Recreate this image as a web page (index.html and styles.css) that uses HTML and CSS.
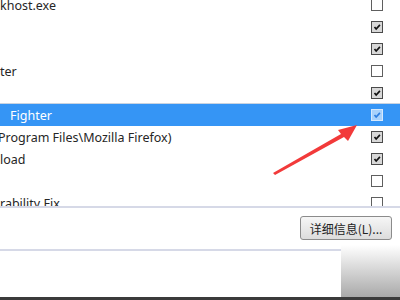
FILE: index.html
```html
<!DOCTYPE html>
<html lang="zh-CN">
<head>
    <meta charset="UTF-8">
    <title>启动项</title>
    <link rel="stylesheet" href="styles.css">
</head>
<body>
    <div class="window">
        <div class="list">
            <div class="rows">
                <div class="row"><span class="name">khost.exe</span><span class="box"></span></div>
                <div class="row"><span class="name"></span><span class="box checked"><svg viewBox="0 0 12 12"><path d="M3 6 L5 8.5 L9.5 3.5"/></svg></span></div>
                <div class="row"><span class="name"></span><span class="box checked"><svg viewBox="0 0 12 12"><path d="M3 6 L5 8.5 L9.5 3.5"/></svg></span></div>
                <div class="row"><span class="name">ter</span><span class="box"></span></div>
                <div class="row"><span class="name"></span><span class="box checked"><svg viewBox="0 0 12 12"><path d="M3 6 L5 8.5 L9.5 3.5"/></svg></span></div>
                <div class="row selected"><span class="name indent">Fighter</span><span class="box checked"><svg viewBox="0 0 12 12"><path d="M3 6 L5 8.5 L9.5 3.5"/></svg></span></div>
                <div class="row"><span class="name clip">Program Files\Mozilla Firefox)</span><span class="box checked"><svg viewBox="0 0 12 12"><path d="M3 6 L5 8.5 L9.5 3.5"/></svg></span></div>
                <div class="row"><span class="name">load</span><span class="box checked"><svg viewBox="0 0 12 12"><path d="M3 6 L5 8.5 L9.5 3.5"/></svg></span></div>
                <div class="row"><span class="name"></span><span class="box"></span></div>
                <div class="row"><span class="name">rability Fix</span><span class="box"></span></div>
            </div>
        </div>
        <div class="actions">
            <button class="details">详细信息(L)...</button>
        </div>
        <div class="separator"></div>
        <div class="footer"></div>
        <div class="taskbar"></div>

        <div class="fade"></div>
        <svg class="arrow" width="400" height="300" viewBox="0 0 400 300">
            <polygon points="273,173 341,134 338,130 357,125 348,141 344,137 275,175"/>
        </svg>
    </div>
</body>
</html>
```

FILE: styles.css
```css
body {
    margin: 0;
    background-color: white;
    font-family: "Noto Sans", "Noto Sans CJK SC", sans-serif;
    font-size: 12.5px;
    color: #262626;
}
.window {
    position: relative;
    width: 400px;
    height: 300px;
    overflow: hidden;
    display: flex;
    flex-direction: column;
}
.list {
    height: 208px;
    box-sizing: border-box;
    overflow: hidden;
    border-bottom: 2px solid #d6d9e7;
}
.rows {
    margin-top: -6px;
}
.row {
    height: 22px;
    display: flex;
    align-items: center;
    justify-content: space-between;
    padding-right: 17px;
}
.row .name {
    white-space: nowrap;
}
.row .indent {
    padding-left: 10px;
}
.row .clip {
    margin-left: -2px;
}
.row.selected {
    background-color: #3595f5;
    color: white;
    box-shadow: 0 -1px 0 #c9d3e0;
}
.box {
    width: 10px;
    height: 10px;
    border: 1px solid #5f5f5f;
    background-color: white;
    display: flex;
    align-items: center;
    justify-content: center;
}
.box.checked {
    background-color: #d8d8d8;
    border-color: #4a4a4a;
}
.box svg {
    width: 10px;
    height: 10px;
    fill: none;
    stroke: #111;
    stroke-width: 2;
}
.selected .box {
    background-color: #a9d2fb;
    border-color: #d6e9fd;
}
.selected .box svg {
    stroke: #2f7fe0;
}
.actions {
    display: flex;
    justify-content: flex-end;
    padding: 8px 8px 0 0;
}
.details {
    width: 92px;
    height: 24px;
    border: 1px solid #8b8b8b;
    border-radius: 3px;
    background: linear-gradient(#f6f6f6, #dcdcdc);
    font-family: "Noto Sans CJK SC", sans-serif;
    font-size: 12px;
    color: #222;
    padding: 0;
}
.separator {
    margin-top: 9px;
    height: 2px;
    background-color: #d6d9e7;
}
.footer {
    flex: 1;
}
.taskbar {
    height: 3px;
    background-color: #3b3b3b;
}
.fade {
    position: absolute;
    left: 341px;
    top: 245px;
    width: 59px;
    height: 52px;
    background: linear-gradient(#ffffff, #a9a9a9);
}
.arrow {
    position: absolute;
    left: 0;
    top: 0;
}
.arrow polygon {
    fill: #f23a3a;
}
```
